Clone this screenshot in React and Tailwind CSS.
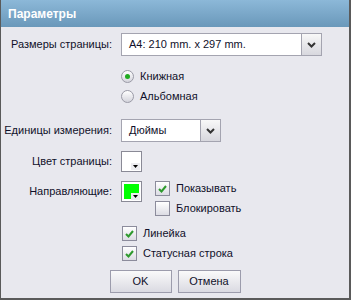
import React from "react";

const font = { fontFamily: '"Liberation Sans", Arial, sans-serif' };

function Chevron() {
  return (
    <svg width="9" height="6" viewBox="0 0 9 6">
      <path d="M1 1 L4.5 4.5 L8 1" stroke="#333" strokeWidth="2" fill="none" />
    </svg>
  );
}

function Select({ width, text }) {
  return (
    <div className={`flex h-[23px] ${width} border border-[#a4a4b0] bg-white`}>
      <div className="flex flex-1 items-center whitespace-nowrap pl-[7px] text-[11px] leading-none text-[#10102a]">{text}</div>
      <div className="flex w-[20px] items-center justify-center border-l border-[#a4a4b0] bg-gradient-to-b from-[#f8f8f8] to-[#d8d8de]">
        <Chevron />
      </div>
    </div>
  );
}

function ColorBox({ color }) {
  return (
    <div className="relative h-[21px] w-[21px] border border-[#8a8a96] bg-white p-[2px]">
      <div className="h-full w-full" style={{ background: color }} />
      <div className="absolute bottom-[1px] right-[1px] flex h-[7px] w-[9px] items-start justify-center bg-[#ececf0]">
        <svg width="5" height="3" viewBox="0 0 5 3" className="mt-[2px]">
          <path d="M0 0 H5 L2.5 3 Z" fill="#000" />
        </svg>
      </div>
    </div>
  );
}

function Check({ checked }) {
  return (
    <div className="flex h-[15px] w-[15px] shrink-0 items-center justify-center border border-[#8c8c9c] bg-gradient-to-b from-[#ffffff] to-[#dcdce4]">
      {checked && (
        <svg width="9" height="8" viewBox="0 0 9 8">
          <path d="M1 4 L3.5 6.5 L8 1" stroke="#2e9a2e" strokeWidth="2" fill="none" />
        </svg>
      )}
    </div>
  );
}

function Radio({ checked }) {
  return (
    <div className="flex h-[13px] w-[13px] shrink-0 items-center justify-center rounded-full border border-[#9a9aa6] bg-gradient-to-b from-[#ffffff] to-[#d4d4dc]">
      {checked && <div className="h-[5px] w-[5px] rounded-full bg-[#1faa1f]" />}
    </div>
  );
}

function Label({ children }) {
  return (
    <div className="w-[111px] shrink-0 whitespace-nowrap text-right text-[11px] leading-none text-[#10102a]">{children}</div>
  );
}

function Text({ children, ml = "ml-[6px]" }) {
  return <span className={`${ml} whitespace-nowrap text-[11px] leading-none`}>{children}</span>;
}

export default function App() {
  return (
    <div
      style={font}
      className="flex h-[300px] w-[351px] flex-col border-b-2 border-l border-r-2 border-[#5a5a5a] bg-[#e8e8ee] text-[#10102a]"
    >
      <div className="flex h-[27px] shrink-0 items-center bg-gradient-to-b from-[#8cb8d8] to-[#6a98ba] pl-[7px] text-[12px] font-bold text-white">
        Параметры
      </div>

      <div className="mt-[6px] flex h-[23px] items-center">
        <Label>Размеры страницы:</Label>
        <div className="ml-[9px]">
          <Select width="w-[201px]" text="A4: 210 mm. x 297 mm." />
        </div>
      </div>

      <div className="mt-[10px] flex h-[20px] items-center pl-[120px]">
        <Radio checked />
        <Text>Книжная</Text>
      </div>
      <div className="flex h-[20px] items-center pl-[120px]">
        <Radio />
        <Text>Альбомная</Text>
      </div>

      <div className="mt-[13px] flex h-[23px] items-center">
        <Label>Единицы измерения:</Label>
        <div className="ml-[9px]">
          <Select width="w-[100px]" text="Дюймы" />
        </div>
      </div>

      <div className="mt-[9px] flex h-[21px] items-center">
        <Label>Цвет страницы:</Label>
        <div className="ml-[9px]">
          <ColorBox color="#ffffff" />
        </div>
      </div>

      <div className="mt-[9px] flex items-start">
        <div className="flex h-[21px] items-center">
          <Label>Направляющие:</Label>
        </div>
        <div className="ml-[9px]">
          <ColorBox color="#00ff00" />
        </div>
        <div className="ml-[13px] flex flex-col gap-[5px]">
          <div className="flex h-[15px] items-center">
            <Check checked />
            <Text>Показывать</Text>
          </div>
          <div className="flex h-[15px] items-center">
            <Check />
            <Text>Блокировать</Text>
          </div>
        </div>
      </div>

      <div className="mt-[10px] flex h-[15px] items-center pl-[121px]">
        <Check checked />
        <Text>Линейка</Text>
      </div>
      <div className="mt-[5px] flex h-[15px] items-center pl-[121px]">
        <Check checked />
        <Text>Статусная строка</Text>
      </div>

      <div className="mt-[9px] flex justify-center gap-[6px]">
        <div className="flex h-[23px] w-[62px] items-center justify-center border border-[#9c9cac] bg-gradient-to-b from-[#fafafa] to-[#dadae2] text-[11px] leading-none">
          OK
        </div>
        <div className="flex h-[23px] w-[63px] items-center justify-center border border-[#9c9cac] bg-gradient-to-b from-[#fafafa] to-[#dadae2] text-[11px] leading-none">
          Отмена
        </div>
      </div>
    </div>
  );
}
